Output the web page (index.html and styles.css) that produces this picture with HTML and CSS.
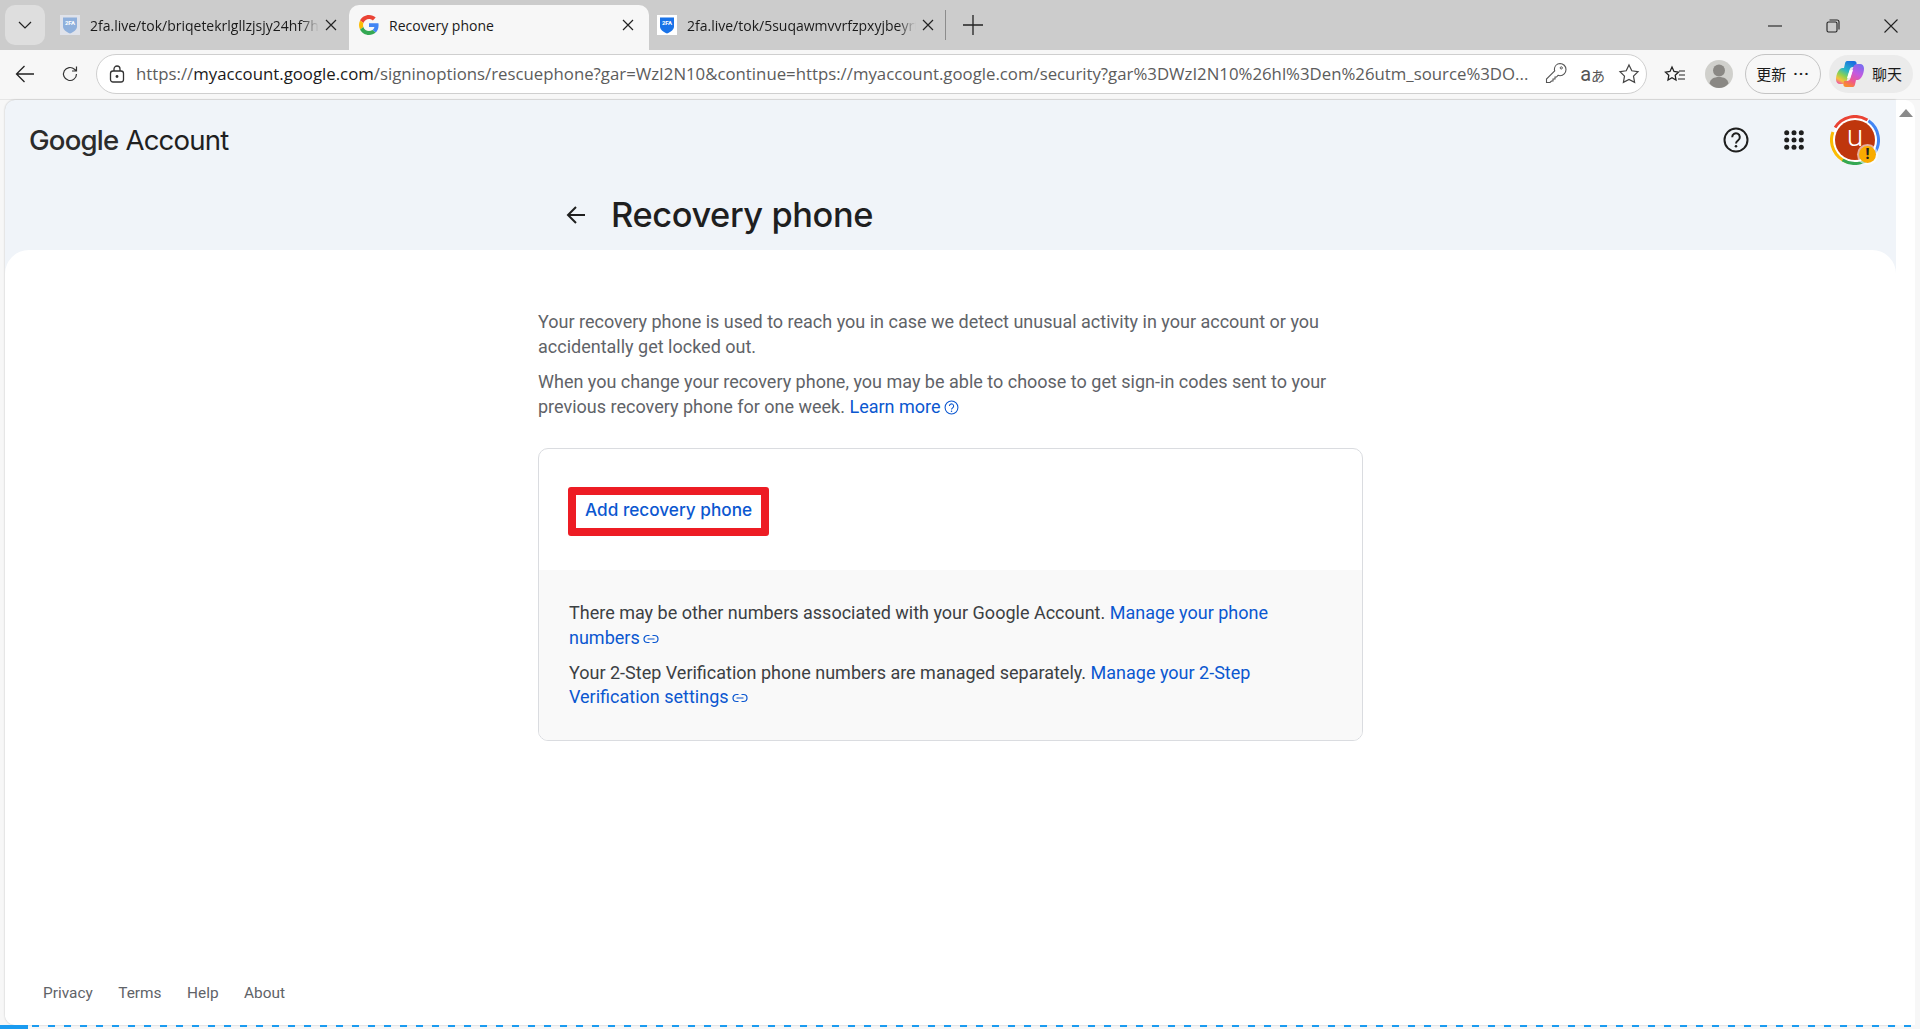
FILE: index.html
```html
<!DOCTYPE html>
<html lang="en">
<head>
    <meta charset="UTF-8">
    <title>Recovery phone</title>
    <link rel="stylesheet" href="styles.css">
</head>
<body>
    <div class="tabstrip">
        <button class="tab-switch">
            <svg width="16" height="16" viewBox="0 0 16 16"><path d="M2 5l6 6 6-6" fill="none" stroke="#222" stroke-width="1.2"/></svg>
        </button>
        <div class="tab tab-first">
            <svg class="favicon" width="20" height="20" viewBox="0 0 20 20">
                <rect width="20" height="20" fill="#dfe2ea"/>
                <path d="M3 2.5h14v9c0 3.5-3.500 5.500-7 7-3.500-1.500-7-3.500-7-7z" fill="#8fb0dc"/>
                <text x="10" y="10" class="favicon-label">2FA</text>
            </svg>
            <span class="tab-title">2fa.live/tok/briqetekrlgllzjsjy24hf7hqkd</span>
            <svg class="tab-close" width="12" height="12" viewBox="0 0 12 12"><path d="M1 1l10 10M11 1L1 11" stroke="#222" stroke-width="1.200"/></svg>
        </div>
        <div class="tab tab-active">
            <svg class="favicon" width="20" height="20" viewBox="0 0 48 48">
                <path fill="#EA4335" d="M24 9.500c3.540 0 6.710 1.220 9.210 3.600l6.850-6.850C35.900 2.380 30.470 0 24 0 14.620 0 6.510 5.380 2.560 13.220l7.980 6.190C12.430 13.720 17.740 9.500 24 9.500z"/>
                <path fill="#4285F4" d="M46.980 24.550c0-1.570-.15-3.090-.38-4.550H24v9.020h12.940c-.58 2.960-2.260 5.480-4.780 7.180l7.730 6c4.510-4.180 7.090-10.360 7.090-17.650z"/>
                <path fill="#FBBC05" d="M10.530 28.590c-.48-1.450-.76-2.990-.76-4.590s.27-3.140.76-4.590l-7.980-6.190C.92 16.460 0 20.120 0 24c0 3.880.92 7.540 2.560 10.780l7.970-6.190z"/>
                <path fill="#34A853" d="M24 48c6.480 0 11.930-2.130 15.890-5.810l-7.730-6c-2.150 1.450-4.920 2.300-8.160 2.300-6.260 0-11.570-4.220-13.470-9.910l-7.980 6.190C6.510 42.620 14.620 48 24 48z"/>
            </svg>
            <span class="tab-title">Recovery phone</span>
            <svg class="tab-close" width="12" height="12" viewBox="0 0 12 12"><path d="M1 1l10 10M11 1L1 11" stroke="#222" stroke-width="1.200"/></svg>
        </div>
        <div class="tab tab-last">
            <svg class="favicon" width="20" height="20" viewBox="0 0 20 20">
                <rect width="20" height="20" fill="#fff"/>
                <path d="M3 2.500h14v9c0 3.500-3.500 5.500-7 7-3.500-1.500-7-3.500-7-7z" fill="#1a73e8"/>
                <text x="10" y="10" class="favicon-label">2FA</text>
            </svg>
            <span class="tab-title">2fa.live/tok/5suqawmvvrfzpxyjbeyrtmn</span>
            <svg class="tab-close" width="12" height="12" viewBox="0 0 12 12"><path d="M1 1l10 10M11 1L1 11" stroke="#222" stroke-width="1.200"/></svg>
        </div>
        <span class="tab-sep"></span>
        <svg class="tab-new" width="20" height="20" viewBox="0 0 20 20"><path d="M10 0v20M0 10h20" stroke="#222" stroke-width="1.300"/></svg>
        <div class="window-controls">
            <svg width="14" height="14" viewBox="0 0 14 14"><path d="M0 7h14" stroke="#222" stroke-width="1.100"/></svg>
            <svg width="14" height="14" viewBox="0 0 14 14"><rect x="1" y="3" width="10" height="10" rx="1.500" fill="none" stroke="#222" stroke-width="1.100"/><path d="M3.500 1h7.500a2 2 0 0 1 2 2v7.500" fill="none" stroke="#222" stroke-width="1.100"/></svg>
            <svg width="14" height="14" viewBox="0 0 14 14"><path d="M.5.500l13 13M13.500.500l-13 13" stroke="#222" stroke-width="1.100"/></svg>
        </div>
    </div>

    <div class="toolbar">
        <svg class="tool-back" width="20" height="20" viewBox="0 0 20 20"><path d="M19 10H1.500M9.500 2l-8 8 8 8" fill="none" stroke="#222" stroke-width="1.300"/></svg>
        <svg class="tool-reload" width="18" height="18" viewBox="0 0 18 18"><path d="M15.500 9a6.500 6.500 0 1 1-2-4.700L15.500 6M15.500 1.500V6H11" fill="none" stroke="#333" stroke-width="1.200"/></svg>
        <div class="urlbar">
            <svg class="url-lock" width="16" height="18" viewBox="0 0 16 18"><rect x="1.500" y="6" width="13" height="11" rx="2.500" fill="none" stroke="#333" stroke-width="1.300"/><path d="M5 6V4a3 3 0 0 1 6 0v2" fill="none" stroke="#333" stroke-width="1.300"/><circle cx="8" cy="11.500" r="1.400" fill="#333"/></svg>
            <span class="url-text">https://<b>myaccount.google.com</b>/signinoptions/rescuephone?gar=WzI2N10&amp;continue=https://myaccount.google.com/security?gar%3DWzI2N10%26hl%3Den%26utm_source%3DO...</span>
            <svg width="22" height="24" viewBox="0 0 22 24"><path d="M15 1.500a6 6 0 0 1 6 6c0 3.500-2.700 6.200-6 6.200-.9 0-1.500-.2-2-.4l-1.500 1.700H10v2H8v2H6.500L5 20.500H1.500V17l8.200-8.200c-.2-.5-.3-1-.3-1.500a6 6 0 0 1 5.600-5.800z" fill="none" stroke="#555" stroke-width="1.100"/><circle cx="16.300" cy="5.900" r="1.100" fill="none" stroke="#555"/></svg>
            <span class="url-translate">a<small>あ</small></span>
            <svg width="22" height="22" viewBox="0 0 22 22"><path d="M11 2l2.800 5.800 6.200.9-4.500 4.400 1.100 6.300L11 16.400l-5.600 3 1.100-6.300L2 8.700l6.200-.9z" fill="none" stroke="#444" stroke-width="1.200"/></svg>
        </div>
        <svg class="tool-fav" width="22" height="22" viewBox="0 0 22 22"><path d="M9 3l2 4.500 4.500.6-3.300 3.200.8 4.700L9 13.700l-4 2.300.8-4.700-3.300-3.200L7 7.500z" fill="none" stroke="#222" stroke-width="1.300" transform="translate(-1 1)"/><path d="M15 8h6M15 12h6M14 16h7" stroke="#222" stroke-width="1.200"/></svg>
        <div class="tool-profile">
            <svg width="28" height="28" viewBox="0 0 28 28"><circle cx="14" cy="14" r="14" fill="#d0d0cc"/><circle cx="14" cy="10.500" r="6" fill="#8a8884"/><path d="M4.500 23.500c.7-4.500 4.500-6.500 9.500-6.500s8.800 2 9.500 6.500C21 26.500 17.500 28 14 28s-7-1.500-9.500-4.500z" fill="#8a8884"/></svg>
        </div>
        <div class="tool-update">更新<span class="update-dots">···</span></div>
        <div class="tool-chat">
            <svg width="28" height="28" viewBox="0 0 28 28">
                <defs>
                    <linearGradient id="copilotA" x1=".7" y1="0" x2=".2" y2="1"><stop offset="0" stop-color="#1a6fe0"/><stop offset=".4" stop-color="#27b6c8"/><stop offset=".65" stop-color="#8fd14f"/><stop offset=".85" stop-color="#f6c33c"/><stop offset="1" stop-color="#f0609a"/></linearGradient>
                    <linearGradient id="copilotB" x1=".8" y1="0" x2=".3" y2="1"><stop offset="0" stop-color="#7a6cf0"/><stop offset=".4" stop-color="#c45ae0"/><stop offset=".75" stop-color="#f0588a"/><stop offset="1" stop-color="#f98a30"/></linearGradient>
                </defs>
                <path d="M11 1h7c2 0 3 1.500 2.500 3.500L20 7h-3c-2 0-3 1-3.500 3L11 20c-.6 2.500-2 4-4.500 4H4c-2.500 0-4-2-4-4.500C0 14 3 8 6.500 8H8l1-4.500C9.300 2 10 1 11 1z" fill="url(#copilotA)"/>
                <path d="M17 27h-7c-2 0-3-1.500-2.500-3.500L8 21h3c2 0 3-1 3.500-3L17 8c.6-2.500 2-4 4.500-4H24c2.500 0 4 2 4 4.500C28 14 25 20 21.500 20H20l-1 4.500c-.3 1.500-1 2.500-2 2.500z" fill="url(#copilotB)"/>
                <path d="M13.500 10.500L17 10l-2.500 7.500-3.500.5z" fill="#fff"/>
            </svg>
            <span>聊天</span>
        </div>
    </div>

    <div class="viewport">
        <div class="page">
            <header class="page-header">
                <div class="topbar">
                    <div class="logo"><span class="logo-google">Google</span> <span class="logo-account">Account</span></div>
                    <div class="top-icons">
                        <svg width="26" height="26" viewBox="0 0 26 26"><circle cx="13" cy="13" r="11.500" fill="none" stroke="#1f1f1f" stroke-width="2"/><path d="M9.200 10.200a3.800 3.800 0 1 1 6 3c-1.400 1-2.200 1.700-2.200 3.200" fill="none" stroke="#1f1f1f" stroke-width="2"/><circle cx="13" cy="19.300" r="1.300" fill="#1f1f1f"/></svg>
                        <svg width="20" height="20" viewBox="0 0 20 20" fill="#1f1f1f"><circle cx="2.700" cy="2.700" r="2.500"/><circle cx="10" cy="2.700" r="2.500"/><circle cx="17.300" cy="2.700" r="2.500"/><circle cx="2.700" cy="10" r="2.500"/><circle cx="10" cy="10" r="2.500"/><circle cx="17.300" cy="10" r="2.500"/><circle cx="2.700" cy="17.300" r="2.500"/><circle cx="10" cy="17.300" r="2.500"/><circle cx="17.300" cy="17.300" r="2.500"/></svg>
                        <div class="avatar">
                            <svg width="50" height="50" viewBox="0 0 50 50">
                                <circle cx="25" cy="25" r="23" fill="#fff"/>
                                <circle cx="25" cy="25" r="20" fill="#bf360c"/>
                                <path d="M25 1.500A23.500 23.500 0 0 1 48.500 25" fill="none" stroke="#fbbc04" stroke-width="3" transform="rotate(200 25 25)"/>
                                <path d="M25 1.500A23.500 23.500 0 0 1 48.500 25" fill="none" stroke="#34a853" stroke-width="3" transform="rotate(122 25 25)"/>
                                <path d="M25 1.500A23.500 23.500 0 0 1 48.500 25" fill="none" stroke="#4285f4" stroke-width="3" transform="rotate(35 25 25)"/>
                                <path d="M25 1.500A23.500 23.500 0 0 1 48.500 25" fill="none" stroke="#ea4335" stroke-width="3" transform="rotate(-58 25 25)"/>
                            </svg>
                            <span class="avatar-letter">u</span>
                            <span class="avatar-badge">!</span>
                        </div>
                    </div>
                </div>
                <div class="title-row">
                    <svg width="20" height="20" viewBox="0 0 20 20"><path d="M19 10H2M10 2l-8 8 8 8" fill="none" stroke="#1f1f1f" stroke-width="2"/></svg>
                    <h1>Recovery phone</h1>
                </div>
            </header>
            <main class="panel">
                <div class="column">
                    <p class="intro">Your recovery phone is used to reach you in case we detect unusual activity in your account or you accidentally get locked out.</p>
                    <p class="intro">When you change your recovery phone, you may be able to choose to get sign-in codes sent to your previous recovery phone for one week. <a href="#">Learn more<svg class="help-mark" width="15" height="15" viewBox="0 0 14 14"><circle cx="7" cy="7" r="6" fill="none" stroke="#0b57d0" stroke-width="1"/><path d="M5 5.600a2 2 0 1 1 3.100 1.700C7.400 7.800 7 8.100 7 8.900" fill="none" stroke="#0b57d0" stroke-width="1"/><circle cx="7" cy="10.500" r=".7" fill="#0b57d0"/></svg></a></p>
                    <section class="card">
                        <div class="card-action">
                            <a class="add-phone" href="#">Add recovery phone</a>
                        </div>
                        <div class="card-notes">
                            <p>There may be other numbers associated with your Google Account. <a href="#">Manage your phone numbers<svg class="link-mark" width="16" height="10" viewBox="0 0 16 10"><path d="M6.500 1.500H4.500a3.500 3.500 0 0 0 0 7h2M9.500 1.500h2a3.500 3.500 0 0 1 0 7h-2M4.500 5h7" fill="none" stroke="#0b57d0" stroke-width="1.200"/></svg></a></p>
                            <p>Your 2-Step Verification phone numbers are managed separately. <a href="#">Manage your 2-Step Verification settings<svg class="link-mark" width="16" height="10" viewBox="0 0 16 10"><path d="M6.500 1.500H4.500a3.500 3.500 0 0 0 0 7h2M9.500 1.500h2a3.500 3.500 0 0 1 0 7h-2M4.500 5h7" fill="none" stroke="#0b57d0" stroke-width="1.200"/></svg></a></p>
                        </div>
                    </section>
                </div>
                <footer class="page-footer">
                    <a href="#">Privacy</a>
                    <a href="#">Terms</a>
                    <a href="#">Help</a>
                    <a href="#">About</a>
                </footer>
            </main>
        </div>
        <div class="scrollbar">
            <svg width="14" height="8" viewBox="0 0 14 8"><path d="M7 0l7 8H0z" fill="#8a8a8a"/></svg>
        </div>
    </div>
    <div class="download-line"></div>
</body>
</html>
```

FILE: styles.css
```css
* {
    box-sizing: border-box;
}
html, body {
    height: 100%;
}
body {
    margin: 0;
    display: flex;
    flex-direction: column;
    overflow: hidden;
    background-color: #f7f7f7;
    font-family: Roboto, "Noto Sans CJK SC", sans-serif;
}
a {
    color: #0b57d0;
    text-decoration: none;
}

/* tab strip */
.tabstrip {
    height: 50px;
    flex: none;
    display: flex;
    align-items: flex-end;
    background-color: #cccccc;
    font-family: "Open Sans", sans-serif;
    font-size: 14px;
    color: #1a1a1a;
}
.tab-switch {
    width: 40px;
    height: 40px;
    margin: 0 0 5px 5px;
    padding: 0;
    border: none;
    border-radius: 10px;
    background-color: #dedede;
    display: flex;
    align-items: center;
    justify-content: center;
}
.tab {
    height: 45px;
    display: flex;
    align-items: center;
    padding-bottom: 5px;
}
.tab-first {
    width: 304px;
    padding-left: 15px;
}
.tab-first .tab-close {
    margin-right: 12px;
}
.tab-active {
    width: 300px;
    padding-left: 10px;
    background-color: #f7f7f7;
    border-radius: 10px 10px 0 0;
}
.tab-last {
    width: 302px;
    padding-left: 8px;
}
.tab-last .tab-close {
    margin-right: 17px;
}
.favicon {
    flex: none;
}
.favicon-label {
    font-size: 6px;
    font-weight: 700;
    fill: #fff;
    text-anchor: middle;
    font-family: Roboto, sans-serif;
}
.tab-title {
    flex: 1;
    margin-left: 10px;
    white-space: nowrap;
    overflow: hidden;
    -webkit-mask-image: linear-gradient(to right, #000 92%, transparent);
    mask-image: linear-gradient(to right, #000 92%, transparent);
}
.tab-active .tab-title {
    -webkit-mask-image: none;
    mask-image: none;
}
.tab-close {
    flex: none;
    margin: 0 15px 0 6px;
}
.tab-sep {
    width: 1px;
    height: 30px;
    margin: 0 0 10px -6px;
    background-color: #8c8c8c;
}
.tab-new {
    margin: 0 0 15px 17px;
}
.window-controls {
    margin: 0 22px 17px auto;
    display: flex;
    gap: 44px;
}

/* address bar row */
.toolbar {
    height: 50px;
    flex: none;
    display: flex;
    align-items: center;
    padding: 0 7px 2px 15px;
    background-color: #f7f7f7;
    border-bottom: 1px solid #e6e6e6;
}
.tool-reload {
    margin-left: 26px;
}
.urlbar {
    width: 1552px;
    height: 40px;
    margin-left: 17px;
    padding: 0 6px 0 12px;
    display: flex;
    align-items: center;
    gap: 13px;
    background-color: #fff;
    border: 1px solid #cfcfcf;
    border-radius: 20px;
}
.url-text {
    flex: 1;
    margin-left: -2px;
    font-family: "Open Sans", sans-serif;
    font-size: 16.8px;
    white-space: nowrap;
    overflow: hidden;
    color: #5c5c5c;
}
.url-text b {
    font-weight: 400;
    color: #1a1a1a;
}
.url-translate {
    font-size: 20px;
    color: #555;
    line-height: 1;
}
.url-translate small {
    font-size: 14px;
}
.tool-fav {
    margin-left: 17px;
}
.tool-profile {
    display: flex;
    margin-left: 19px;
}
.tool-update {
    width: 76px;
    height: 40px;
    margin-left: 12px;
    display: flex;
    align-items: center;
    justify-content: center;
    gap: 7px;
    border: 1px solid #c4c4c4;
    border-radius: 20px;
    font-size: 15px;
    color: #1a1a1a;
}
.update-dots {
    font-weight: 700;
    letter-spacing: 1px;
}
.tool-chat {
    width: 84px;
    height: 38px;
    margin-left: 8px;
    padding-left: 7px;
    display: flex;
    align-items: center;
    gap: 8px;
    border-radius: 19px;
    background-color: #ebebeb;
    font-size: 15px;
    color: #1a1a1a;
}

/* page */
.viewport {
    flex: 1;
    min-height: 0;
    display: flex;
    padding-left: 5px;
}
.page {
    flex: 1;
    display: flex;
    flex-direction: column;
    background-color: #f0f4f9;
    border-radius: 10px 0 0 10px;
    overflow: hidden;
    box-shadow: 0 0 2px rgba(0, 0, 0, 0.25);
}
.page-header {
    height: 150px;
    flex: none;
}
.topbar {
    height: 80px;
    display: flex;
    align-items: center;
    justify-content: space-between;
    padding: 0 16px 0 24px;
}
.logo {
    font-family: Inter, sans-serif;
    font-size: 27.6px;
    color: #1f1f1f;
    letter-spacing: -0.8px;
}
.logo-google {
    font-weight: 500;
    color: #2b2b2b;
}
.top-icons {
    display: flex;
    align-items: center;
    gap: 35px;
}
.avatar {
    position: relative;
    width: 50px;
    height: 50px;
    margin-left: -9px;
}
.avatar-letter {
    position: absolute;
    left: 0;
    right: 0;
    top: 3px;
    text-align: center;
    color: #fff;
    font-size: 30px;
    font-weight: 300;
    line-height: 36px;
}
.avatar-badge {
    position: absolute;
    right: 4px;
    bottom: 2px;
    width: 17px;
    height: 17px;
    border-radius: 50%;
    background-color: #f9ab00;
    color: #1f1f1f;
    text-align: center;
    font-size: 14px;
    font-weight: 900;
    line-height: 17px;
    box-shadow: 0 0 0 2px rgba(255, 255, 255, 0.6);
}
.title-row {
    width: 825px;
    margin: 0 auto;
    padding-left: 28px;
    display: flex;
    align-items: center;
    gap: 25px;
}
.title-row h1 {
    margin: 0;
    font-family: Inter, sans-serif;
    font-size: 34.4px;
    font-weight: 500;
    letter-spacing: -0.4px;
    line-height: 70px;
    color: #1f1f1f;
}
.panel {
    flex: 1;
    display: flex;
    flex-direction: column;
    background-color: #fff;
    border-radius: 24px 24px 0 0;
}
.column {
    width: 825px;
    margin: 0 auto;
    padding-top: 60px;
    flex: 1;
}
.intro {
    margin: 0 0 11px;
    font-size: 18px;
    line-height: 24.6px;
    color: #5f6368;
}
.help-mark {
    margin-left: 3px;
    vertical-align: -2px;
}
.card {
    margin-top: 29px;
    border: 1px solid #dadce0;
    border-radius: 10px;
    overflow: hidden;
}
.card-action {
    height: 121px;
    padding: 38px 0 0 29px;
}
.add-phone {
    display: inline-block;
    height: 49px;
    padding: 0 9px;
    border: 8px solid #ed1c24;
    border-radius: 3px;
    font-family: Inter, sans-serif;
    font-size: 17.2px;
    font-weight: 500;
    line-height: 29px;
}
.card-notes {
    padding: 31px 36px 30px 30px;
    background-color: #f9f9f9;
    font-size: 18px;
    line-height: 24.6px;
    color: #3c4043;
}
.card-notes p {
    margin: 0 0 10px;
}
.card-notes p:last-child {
    margin-bottom: 0;
}
.link-mark {
    margin-left: 3px;
}
.page-footer {
    display: flex;
    gap: 25.5px;
    padding: 0 0 22px 38px;
    font-size: 15.4px;
    line-height: 20px;
}
.page-footer a {
    color: #5f6368;
}

/* right gutter and bottom strip */
.scrollbar {
    width: 19px;
    margin-right: 5px;
    padding-top: 9px;
    display: flex;
    justify-content: center;
    align-items: flex-start;
    background-color: #fff;
    border-radius: 0 10px 0 0;
}
.download-line {
    height: 4px;
    flex: none;
    background:
        linear-gradient(#1a9bf0, #1a9bf0) left / 28px 100% no-repeat,
        repeating-linear-gradient(to right, #1a9bf0 0 7px, transparent 7px 16px) left top / 100% 2px no-repeat;
}
```
